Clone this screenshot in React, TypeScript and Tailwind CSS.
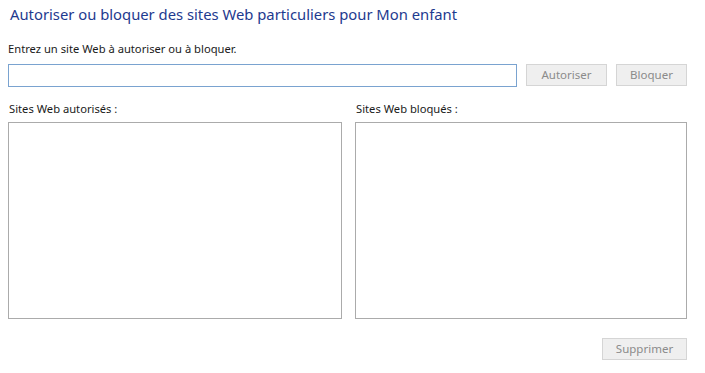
const font = { fontFamily: '"Segoe UI", "Noto Sans", sans-serif' };

function DisabledButton({ label, width }: { label: string; width: string }) {
	return (
		<button
			disabled
			className={`${width} h-[22px] bg-[#efefef] border border-[#d5d5d5] text-[11.5px] text-[#8b8b8b] leading-none`}
		>
			{label}
		</button>
	);
}

export default function App() {
	return (
		<div className="w-[705px] h-[373px] bg-white px-2 text-[#1a1a1a]" style={font}>
			<h1 className="pl-[2px] pt-[3px] h-[38px] text-[14.8px] text-[#1e3a8f] leading-[22px]">
				Autoriser ou bloquer des sites Web particuliers pour Mon enfant
			</h1>
			<p className="text-[11.2px] leading-[18px] h-[26px] pt-[2px]">
				Entrez un site Web à autoriser ou à bloquer.
			</p>
			<div className="flex items-center h-[22px]">
				<input className="w-[509px] h-[23px] border border-[#7aa3d0] outline-none" />
				<div className="ml-[9px] flex gap-[9px]">
					<DisabledButton label="Autoriser" width="w-[81px]" />
					<DisabledButton label="Bloquer" width="w-[71px]" />
				</div>
			</div>
			<div className="flex gap-[13px] mt-[13px] w-[679px]">
				<div className="flex flex-col w-[334px]">
					<span className="text-[11.2px] leading-[20px] pl-px h-[23px]">Sites Web autorisés :</span>
					<div className="h-[197px] border border-[#ababab]" />
				</div>
				<div className="flex flex-col w-[332px]">
					<span className="text-[11.2px] leading-[20px] pl-px h-[23px]">Sites Web bloqués :</span>
					<div className="h-[197px] border border-[#ababab]" />
				</div>
			</div>
			<div className="flex justify-end w-[679px] mt-[19px]">
				<DisabledButton label="Supprimer" width="w-[85px]" />
			</div>
		</div>
	);
}
